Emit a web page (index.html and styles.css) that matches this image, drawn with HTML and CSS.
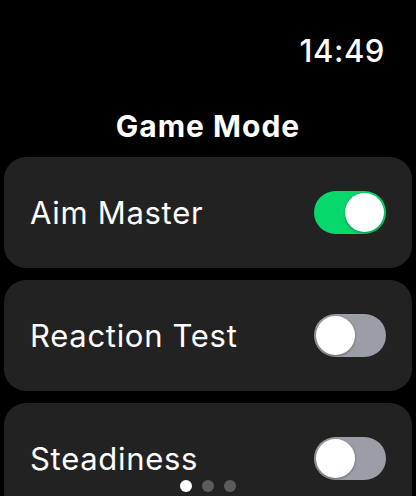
FILE: index.html
```html
<!DOCTYPE html>
<html lang="en">
<head>
    <meta charset="UTF-8">
    <meta name="viewport" content="width=device-width, initial-scale=1.0">
    <title>Game Mode</title>
    <link rel="stylesheet" href="styles.css">
</head>
<body>
    <div class="status">
        <span class="time">14:49</span>
    </div>
    <h1 class="title">Game Mode</h1>
    <div class="list">
        <div class="row">
            <span class="label">Aim Master</span>
            <div class="toggle on"><div class="knob"></div></div>
        </div>
        <div class="row">
            <span class="label">Reaction Test</span>
            <div class="toggle"><div class="knob"></div></div>
        </div>
        <div class="row">
            <span class="label">Steadiness</span>
            <div class="toggle"><div class="knob"></div></div>
        </div>
    </div>
    <div class="pager">
        <span class="dot active"></span>
        <span class="dot"></span>
        <span class="dot"></span>
    </div>
</body>
</html>
```

FILE: styles.css
```css
body {
    font-family: Inter, "Liberation Sans", sans-serif;
    background-color: #000;
    color: white;
    margin: 0;
    padding: 0;
    height: 100vh;
    overflow: hidden;
}
.status {
    height: 100px;
    display: flex;
    justify-content: flex-end;
    align-items: center;
    padding-right: 31px;
}
.time {
    font-size: 31px;
    font-weight: 500;
    letter-spacing: 0.6px;
}
.title {
    margin: 0;
    height: 52px;
    line-height: 52px;
    text-align: center;
    font-size: 30px;
    font-weight: 700;
    letter-spacing: 1px;
}
.list {
    display: flex;
    flex-direction: column;
    gap: 12px;
    margin: 5px 4px 0;
}
.row {
    background: #222;
    height: 111px;
    flex-shrink: 0;
    border-radius: 22px;
    display: flex;
    align-items: center;
    justify-content: space-between;
    padding: 0 26px 0 26px;
}
.label {
    font-size: 31px;
    font-weight: 400;
    letter-spacing: 0.7px;
}
.toggle {
    width: 72px;
    height: 43px;
    border-radius: 22px;
    background: #9b9ea6;
    display: flex;
    align-items: center;
    padding: 0 2px;
    box-sizing: border-box;
}
.toggle.on {
    background: #07d86c;
    justify-content: flex-end;
}
.knob {
    width: 39px;
    height: 39px;
    border-radius: 50%;
    background: white;
    box-shadow: 0 1px 3px rgba(0, 0, 0, 0.35);
}
.pager {
    position: fixed;
    bottom: 4px;
    left: 0;
    right: 0;
    display: flex;
    justify-content: center;
    gap: 10px;
}
.dot {
    width: 12px;
    height: 12px;
    border-radius: 50%;
    background: #5c5c5c;
}
.dot.active {
    background: white;
}
```
